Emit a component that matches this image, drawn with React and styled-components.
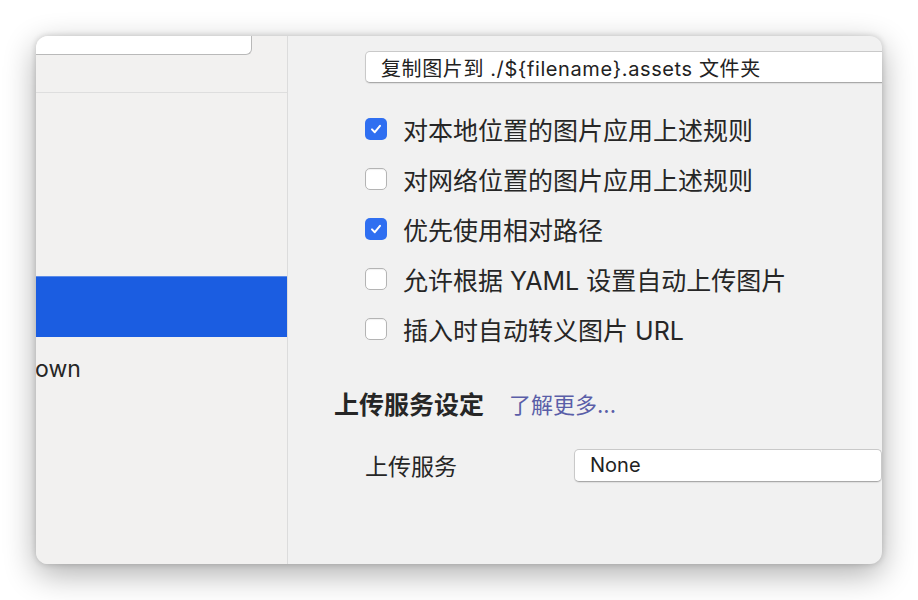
import styled, { createGlobalStyle } from "styled-components";

const Global = createGlobalStyle`
  html, body {
    margin: 0;
    padding: 0;
    background: #ffffff;
  }
  body {
    font-family: "Inter", "Noto Sans CJK SC", "Noto Sans", sans-serif;
    color: #262626;
  }
`;

const Stage = styled.div`
  padding: 36px;
  width: 918px;
  height: 600px;
  box-sizing: border-box;
`;

const Window = styled.div`
  width: 846px;
  height: 528px;
  display: flex;
  border-radius: 12px;
  overflow: hidden;
  background: #f1f1f1;
  box-shadow: 0 10px 32px rgba(0, 0, 0, 0.32), 0 0 6px rgba(0, 0, 0, 0.18);
`;

const Sidebar = styled.div`
  width: 251px;
  flex-shrink: 0;
  background: #f2f1f0;
  border-right: 1px solid #dcdcdc;
  display: flex;
  flex-direction: column;
`;

const SearchArea = styled.div`
  height: 56px;
  border-bottom: 1px solid #dedede;
`;

const SearchBox = styled.div`
  width: 215px;
  height: 18px;
  background: #ffffff;
  border-right: 1px solid #b9b9b9;
  border-bottom: 1px solid #b9b9b9;
  border-bottom-right-radius: 6px;
`;

const NavRow = styled.div`
  height: 61px;
  display: flex;
  align-items: center;
  font-size: 23px;
  color: #262626;
  background: ${(p) => (p.active ? "#1b5de1" : "transparent")};
  border-top: ${(p) => (p.active ? "1px solid #5d8ce8" : "none")};
  box-sizing: border-box;
  overflow: hidden;
  white-space: nowrap;
`;

const NavText = styled.span`
  margin-left: -1px;
  margin-top: 2px;
`;

const Panel = styled.div`
  flex: 1;
  min-width: 0;
  overflow: hidden;
  padding: 15px 0 0 46px;
  display: flex;
  flex-direction: column;
`;

const Indent = styled.div`
  margin-left: 31px;
`;

const Dropdown = styled.div`
  width: 560px;
  height: 32px;
  box-sizing: border-box;
  background: #ffffff;
  border: 1px solid #c9c9c9;
  border-bottom-color: #a9a9a9;
  border-radius: 5px;
  display: flex;
  align-items: center;
  padding-left: 15px;
  font-size: 20px;
  letter-spacing: 0.6px;
  color: #222;
  white-space: nowrap;
  box-shadow: 0 1px 1px rgba(0, 0, 0, 0.08);
`;

const CheckList = styled.div`
  margin-top: 21px;
  display: flex;
  flex-direction: column;
`;

const CheckRow = styled.label`
  height: 50px;
  display: flex;
  align-items: center;
  gap: 16px;
  font-size: 25px;
  color: #262626;
  white-space: nowrap;
`;

const Box = styled.span`
  width: 22px;
  height: 22px;
  box-sizing: border-box;
  border-radius: 5px;
  flex-shrink: 0;
  display: flex;
  align-items: center;
  justify-content: center;
  background: ${(p) => (p.checked ? "#2f6ff1" : "#ffffff")};
  border: ${(p) => (p.checked ? "none" : "1px solid #b4b4b4")};
  box-shadow: ${(p) => (p.checked ? "none" : "inset 0 1px 1px rgba(0,0,0,0.06)")};
`;

const SectionHead = styled.div`
  margin-top: 34px;
  height: 30px;
  display: flex;
  align-items: center;
  gap: 25px;
  white-space: nowrap;
`;

const HeadTitle = styled.span`
  font-size: 25px;
  font-weight: 700;
  color: #262626;
`;

const HeadLink = styled.span`
  font-size: 22px;
  color: #5a5ea8;
`;

const FieldRow = styled.div`
  margin-top: 30px;
  display: flex;
  align-items: center;
  white-space: nowrap;
`;

const FieldLabel = styled.span`
  width: 209px;
  flex-shrink: 0;
  font-size: 23px;
  color: #262626;
`;

const Select = styled(Dropdown)`
  width: 340px;
  height: 33px;
  letter-spacing: 0;
`;

const Check = ({ checked, children }) => (
  <CheckRow>
    <Box checked={checked}>
      {checked && (
        <svg width="14" height="14" viewBox="0 0 14 14">
          <path
            d="M3 7.4 L5.8 10.2 L11 3.8"
            fill="none"
            stroke="#ffffff"
            strokeWidth="2"
            strokeLinecap="round"
            strokeLinejoin="round"
          />
        </svg>
      )}
    </Box>
    {children}
  </CheckRow>
);

export default function App() {
  return (
    <>
      <Global />
      <Stage>
        <Window>
          <Sidebar>
            <SearchArea>
              <SearchBox />
            </SearchArea>
            <NavRow />
            <NavRow />
            <NavRow />
            <NavRow active />
            <NavRow>
              <NavText>own</NavText>
            </NavRow>
          </Sidebar>
          <Panel>
            <Indent>
              <Dropdown>复制图片到 ./${"{filename}"}.assets 文件夹</Dropdown>
              <CheckList>
                <Check checked>对本地位置的图片应用上述规则</Check>
                <Check>对网络位置的图片应用上述规则</Check>
                <Check checked>优先使用相对路径</Check>
                <Check>允许根据 YAML 设置自动上传图片</Check>
                <Check>插入时自动转义图片 URL</Check>
              </CheckList>
            </Indent>
            <SectionHead>
              <HeadTitle>上传服务设定</HeadTitle>
              <HeadLink>了解更多...</HeadLink>
            </SectionHead>
            <Indent>
              <FieldRow>
                <FieldLabel>上传服务</FieldLabel>
                <Select>None</Select>
              </FieldRow>
            </Indent>
          </Panel>
        </Window>
      </Stage>
    </>
  );
}
